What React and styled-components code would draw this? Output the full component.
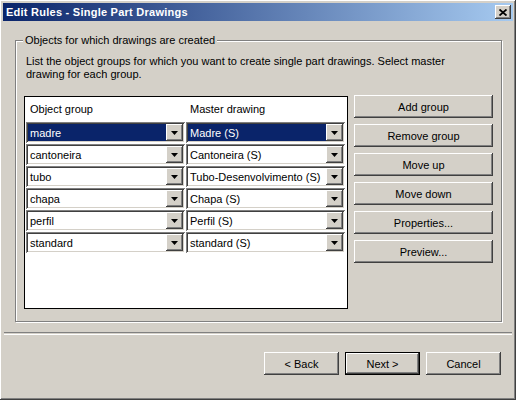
import React from 'react';
import styled, { createGlobalStyle } from 'styled-components';

const GlobalStyle = createGlobalStyle`
  html, body {
    margin: 0;
    padding: 0;
    background: #d4d0c8;
  }
  body {
    font-family: "Liberation Sans", Arial, sans-serif;
    font-size: 11px;
    color: #000;
  }
`;

const raised = `
  box-shadow:
    inset -1px -1px #404040,
    inset 1px 1px #fff,
    inset -2px -2px #808080,
    inset 2px 2px #d4d0c8;
`;

const Window = styled.div`
  width: 516px;
  height: 400px;
  box-sizing: border-box;
  padding: 3px;
  background: #d4d0c8;
  display: flex;
  flex-direction: column;
  ${raised}
`;

const TitleBar = styled.div`
  height: 18px;
  display: flex;
  align-items: center;
  justify-content: space-between;
  padding-left: 3px;
  background: linear-gradient(to right, #0a246a, #a6caf0);
  color: #fff;
  font-weight: bold;
  font-size: 11px;
  letter-spacing: 0.25px;
`;

const CloseButton = styled.div`
  width: 16px;
  height: 14px;
  margin-right: 2px;
  background: #d4d0c8;
  display: flex;
  align-items: center;
  justify-content: center;
  ${raised}
`;

const GroupBox = styled.fieldset`
  margin: 13px 11px 0 12px;
  padding: 8px 8px 12px 8px;
  border: 1px solid #808080;
  box-shadow: inset 1px 1px #fff, 1px 1px #fff;
`;

const Caption = styled.legend`
  margin-left: -1px;
  padding: 0 2px;
  line-height: 13px;
  background: #d4d0c8;
`;

const Description = styled.p`
  max-width: 435px;
  margin: 0 0 15px 2px;
  line-height: 13px;
`;

const Body = styled.div`
  display: flex;
  gap: 6px;
  align-items: flex-start;
`;

const ListBox = styled.div`
  width: 324px;
  height: 213px;
  box-sizing: border-box;
  border: 1px solid #000;
  background: #fff;
  padding-left: 1px;
`;

const Grid = styled.div`
  display: grid;
  grid-template-columns: 159px 159px;
  column-gap: 1px;
  row-gap: 1px;
`;

const HeaderCell = styled.div`
  height: 24px;
  box-sizing: border-box;
  padding: 6px 0 0 4px;
  line-height: 13px;
`;

const Combo = styled.div`
  height: 21px;
  box-sizing: border-box;
  padding: 2px;
  display: flex;
  box-shadow:
    inset 1px 1px #808080,
    inset -1px -1px #fff,
    inset 2px 2px #404040,
    inset -2px -2px #d4d0c8;
`;

const ComboText = styled.div`
  flex: 1;
  display: flex;
  align-items: center;
  padding-left: 2px;
  background: ${p => (p.$selected ? '#0a246a' : '#fff')};
  color: ${p => (p.$selected ? '#fff' : '#000')};
  white-space: nowrap;
  overflow: hidden;
`;

const ArrowButton = styled.div`
  width: 17px;
  height: 17px;
  background: #d4d0c8;
  display: flex;
  align-items: center;
  justify-content: center;
  ${raised}
`;

const ButtonColumn = styled.div`
  display: flex;
  flex-direction: column;
  gap: 6px;
  margin-top: -1px;
`;

const Button = styled.button`
  width: ${p => p.$width || 139}px;
  height: 23px;
  padding: 0;
  border: ${p => (p.$default ? '1px solid #000' : 'none')};
  background: #d4d0c8;
  font-family: inherit;
  font-size: 11px;
  color: #000;
  ${raised}
`;

const Separator = styled.div`
  margin: 10px 1px 0 1px;
  height: 1px;
  border-top: 1px solid #808080;
  border-bottom: 1px solid #fff;
`;

const Footer = styled.div`
  display: flex;
  justify-content: flex-end;
  gap: 6px;
  margin-top: 17px;
  padding-right: 12px;
`;

const rows = [
  { group: 'madre', master: 'Madre (S)' },
  { group: 'cantoneira', master: 'Cantoneira (S)' },
  { group: 'tubo', master: 'Tubo-Desenvolvimento (S)' },
  { group: 'chapa', master: 'Chapa (S)' },
  { group: 'perfil', master: 'Perfil (S)' },
  { group: 'standard', master: 'standard (S)' },
];

const sideButtons = ['Add group', 'Remove group', 'Move up', 'Move down', 'Properties...', 'Preview...'];

function Arrow() {
  return (
    <svg width="7" height="4" viewBox="0 0 7 4">
      <polygon points="0,0 7,0 3.5,4" fill="#000" />
    </svg>
  );
}

function ComboBox({ value, selected }) {
  return (
    <Combo>
      <ComboText $selected={selected}>{value}</ComboText>
      <ArrowButton>
        <Arrow />
      </ArrowButton>
    </Combo>
  );
}

export default function App() {
  return (
    <>
      <GlobalStyle />
      <Window>
        <TitleBar>
          <span>Edit Rules - Single Part Drawings</span>
          <CloseButton>
            <svg width="8" height="7" viewBox="0 0 8 7">
              <path d="M0.5 0.5 L7.5 6.5 M7.5 0.5 L0.5 6.5" stroke="#000" strokeWidth="1.8" />
            </svg>
          </CloseButton>
        </TitleBar>

        <GroupBox>
          <Caption>Objects for which drawings are created</Caption>
          <Description>
            List the object groups for which you want to create single part drawings. Select master
            drawing for each group.
          </Description>
          <Body>
            <ListBox>
              <Grid>
                <HeaderCell>Object group</HeaderCell>
                <HeaderCell>Master drawing</HeaderCell>
                {rows.map((r, i) => (
                  <React.Fragment key={r.group}>
                    <ComboBox value={r.group} selected={i === 0} />
                    <ComboBox value={r.master} selected={i === 0} />
                  </React.Fragment>
                ))}
              </Grid>
            </ListBox>
            <ButtonColumn>
              {sideButtons.map(label => (
                <Button key={label}>{label}</Button>
              ))}
            </ButtonColumn>
          </Body>
        </GroupBox>

        <Separator />
        <Footer>
          <Button $width={75}>&lt; Back</Button>
          <Button $width={75} $default>Next &gt;</Button>
          <Button $width={75}>Cancel</Button>
        </Footer>
      </Window>
    </>
  );
}
